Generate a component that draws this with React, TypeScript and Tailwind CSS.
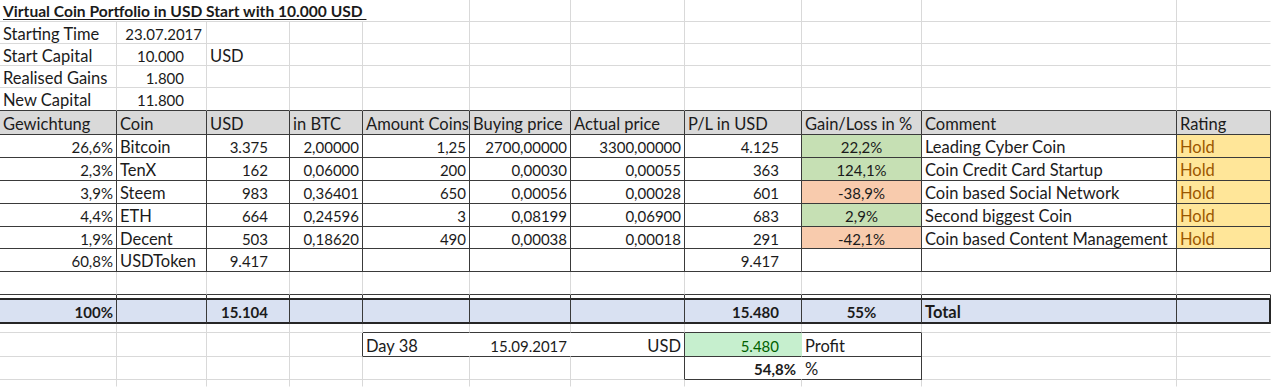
import type { ReactNode } from "react";

type Line = "g" | "d" | "n" | "D";
type Align = "l" | "r" | "c";

const COLS = "grid grid-cols-[117px_90px_83px_73px_107px_101px_114px_117px_120px_255px_94px]";

const RIGHT: Record<Line, string> = {
  g: "border-r border-r-[#d9d9d9]",
  d: "border-r border-r-[#3a3a3a]",
  n: "border-r border-r-transparent",
  D: "border-r-2 border-r-[#262626]",
};

const BOTTOM: Record<Line, string> = {
  g: "border-b border-b-[#d9d9d9]",
  d: "border-b border-b-[#3a3a3a]",
  n: "border-b border-b-transparent",
  D: "border-b-2 border-b-[#262626]",
};

const ALIGN: Record<Align, string> = {
  l: "justify-start",
  r: "justify-end",
  c: "justify-center",
};

function Cell({
  children,
  r = "g",
  b = "g",
  align = "l",
  num = false,
  className = "",
}: {
  children?: ReactNode;
  r?: Line;
  b?: Line;
  align?: Align;
  num?: boolean;
  className?: string;
}) {
  return (
    <div
      className={`flex items-center whitespace-nowrap px-[3px] pt-[3px] ${num ? "text-[15px]" : ""} ${RIGHT[r]} ${BOTTOM[b]} ${ALIGN[align]} ${className}`}
    >
      {children}
    </div>
  );
}

// 11 columns, last one has no visible right gridline
function EmptyRow({ h, b = "g" }: { h: string; b?: Line }) {
  return (
    <div className={`${COLS} ${h}`}>
      {Array.from({ length: 11 }).map((_, i) => (
        <Cell key={i} r={i === 10 ? "n" : "g"} b={b} />
      ))}
    </div>
  );
}

const info = [
  { label: "Starting Time", value: "23.07.2017", unit: "", pad: "pr-[4px]" },
  { label: "Start Capital", value: "10.000", unit: "USD", pad: "pr-[22px]" },
  { label: "Realised Gains", value: "1.800", unit: "", pad: "pr-[22px]" },
  { label: "New Capital", value: "11.800", unit: "", pad: "pr-[22px]" },
];

const headers = [
  "Gewichtung",
  "Coin",
  "USD",
  "in BTC",
  "Amount Coins",
  "Buying price",
  "Actual price",
  "P/L in USD",
  "Gain/Loss in %",
  "Comment",
  "Rating",
];

const coins = [
  { w: "26,6%", coin: "Bitcoin", usd: "3.375", btc: "2,00000", amount: "1,25", buy: "2700,00000", actual: "3300,00000", pl: "4.125", gain: "22,2%", comment: "Leading Cyber Coin" },
  { w: "2,3%", coin: "TenX", usd: "162", btc: "0,06000", amount: "200", buy: "0,00030", actual: "0,00055", pl: "363", gain: "124,1%", comment: "Coin Credit Card Startup" },
  { w: "3,9%", coin: "Steem", usd: "983", btc: "0,36401", amount: "650", buy: "0,00056", actual: "0,00028", pl: "601", gain: "-38,9%", comment: "Coin based Social Network" },
  { w: "4,4%", coin: "ETH", usd: "664", btc: "0,24596", amount: "3", buy: "0,08199", actual: "0,06900", pl: "683", gain: "2,9%", comment: "Second biggest Coin" },
  { w: "1,9%", coin: "Decent", usd: "503", btc: "0,18620", amount: "490", buy: "0,00038", actual: "0,00018", pl: "291", gain: "-42,1%", comment: "Coin based Content Management" },
];

export default function App() {
  return (
    <div className="w-[1280px] h-[387px] overflow-hidden bg-white font-[Lato,'Liberation_Sans',sans-serif] text-[16.5px] leading-none text-[#1b1b1b]">
      <div className="w-[1271px]">
        {/* title */}
        <div className={`${COLS} h-[22px]`}>
          <Cell className="col-span-5 font-bold text-[15.6px]">
            <span className="underline decoration-1 underline-offset-2 whitespace-pre">
              {"Virtual Coin Portfolio in USD Start with 10.000 USD "}
            </span>
          </Cell>
          {Array.from({ length: 6 }).map((_, i) => (
            <Cell key={i} r={i === 5 ? "n" : "g"} />
          ))}
        </div>

        {info.map((row, idx) => {
          const last = idx === info.length - 1;
          const b: Line = last ? "d" : "g";
          return (
            <div key={row.label} className={`${COLS} ${last ? "h-[23px]" : "h-[22px]"}`}>
              <Cell b={b}>{row.label}</Cell>
              <Cell b={b} align="r" num className={row.pad}>
                {row.value}
              </Cell>
              <Cell b={b}>{row.unit}</Cell>
              {Array.from({ length: 8 }).map((_, i) => (
                <Cell key={i} b={b} r={i === 7 ? "n" : "g"} />
              ))}
            </div>
          );
        })}

        {/* header */}
        <div className={`${COLS} h-[24px] bg-[#d9d9d9]`}>
          {headers.map((h) => (
            <Cell key={h} r="d" b="d">
              {h}
            </Cell>
          ))}
        </div>

        {coins.map((c, idx) => {
          const positive = !c.gain.startsWith("-");
          return (
            <div key={c.coin} className={`${COLS} ${idx === 4 ? "h-[22px]" : "h-[23px]"}`}>
              <Cell r="d" b="d" align="r" num>{c.w}</Cell>
              <Cell r="d" b="d">{c.coin}</Cell>
              <Cell r="d" b="d" align="r" num className="pr-[21px]">{c.usd}</Cell>
              <Cell r="d" b="d" align="r" num>{c.btc}</Cell>
              <Cell r="d" b="d" align="r" num>{c.amount}</Cell>
              <Cell r="d" b="d" align="r" num>{c.buy}</Cell>
              <Cell r="d" b="d" align="r" num>{c.actual}</Cell>
              <Cell r="d" b="d" align="r" num className="pr-[22px]">{c.pl}</Cell>
              <Cell r="d" b="d" align="c" num className={positive ? "bg-[#c6e0b4]" : "bg-[#f8cbad]"}>
                {c.gain}
              </Cell>
              <Cell r="d" b="d">{c.comment}</Cell>
              <Cell r="d" b="d" className="bg-[#ffe699] text-[#9c5700]">Hold</Cell>
            </div>
          );
        })}

        {/* cash */}
        <div className={`${COLS} h-[23px]`}>
          <Cell r="d" b="d" align="r" num>60,8%</Cell>
          <Cell r="d" b="d">USDToken</Cell>
          <Cell r="d" b="d" align="r" num className="pr-[21px]">9.417</Cell>
          <Cell r="d" b="d" />
          <Cell r="d" b="d" />
          <Cell r="d" b="d" />
          <Cell r="d" b="d" />
          <Cell r="d" b="d" align="r" num className="pr-[22px]">9.417</Cell>
          <Cell r="d" b="d" />
          <Cell r="d" b="d" />
          <Cell r="d" b="d" />
        </div>

        <EmptyRow h="h-[23px]" b="d" />

        {/* double line above total */}
        <div className={`${COLS} h-[5px]`}>
          {Array.from({ length: 11 }).map((_, i) => (
            <Cell key={i} r="d" b="D" className="pt-0" />
          ))}
        </div>

        {/* total */}
        <div className={`${COLS} h-[24px] bg-[#d9e1f2] font-bold`}>
          <Cell r="d" b="D" align="r" num>100%</Cell>
          <Cell r="d" b="D" />
          <Cell r="d" b="D" align="r" num className="pr-[21px]">15.104</Cell>
          <Cell r="d" b="D" />
          <Cell r="d" b="D" />
          <Cell r="d" b="D" />
          <Cell r="d" b="D" />
          <Cell r="d" b="D" align="r" num className="pr-[22px]">15.480</Cell>
          <Cell r="d" b="D" align="c" num>55%</Cell>
          <Cell r="d" b="D">Total</Cell>
          <Cell r="D" b="D" />
        </div>

        {/* spacer row */}
        <div className={`${COLS} h-[9px]`}>
          {Array.from({ length: 11 }).map((_, i) => (
            <Cell key={i} className="pt-0" r={i === 10 ? "n" : "g"} b={i >= 4 && i <= 8 ? "d" : "g"} />
          ))}
        </div>

        {/* day summary */}
        <div className={`${COLS} h-[24px]`}>
          <Cell />
          <Cell />
          <Cell />
          <Cell r="d" />
          <Cell r="n" b="d">Day 38</Cell>
          <Cell r="n" b="d" align="r" num>15.09.2017</Cell>
          <Cell r="d" b="d" align="r">USD</Cell>
          <Cell r="n" b="d" align="r" num className="bg-[#c6efce] text-[#006100] pr-[22px]">
            5.480
          </Cell>
          <Cell r="d" b="d">Profit</Cell>
          <Cell />
          <Cell r="n" />
        </div>

        <div className={`${COLS} h-[23px]`}>
          <Cell />
          <Cell />
          <Cell />
          <Cell />
          <Cell />
          <Cell />
          <Cell r="d" />
          <Cell r="n" b="d" align="r" num className="font-bold pr-[5px]">54,8%</Cell>
          <Cell r="d" b="d">%</Cell>
          <Cell />
          <Cell r="n" />
        </div>

        <EmptyRow h="h-[7px]" b="n" />
      </div>
    </div>
  );
}
